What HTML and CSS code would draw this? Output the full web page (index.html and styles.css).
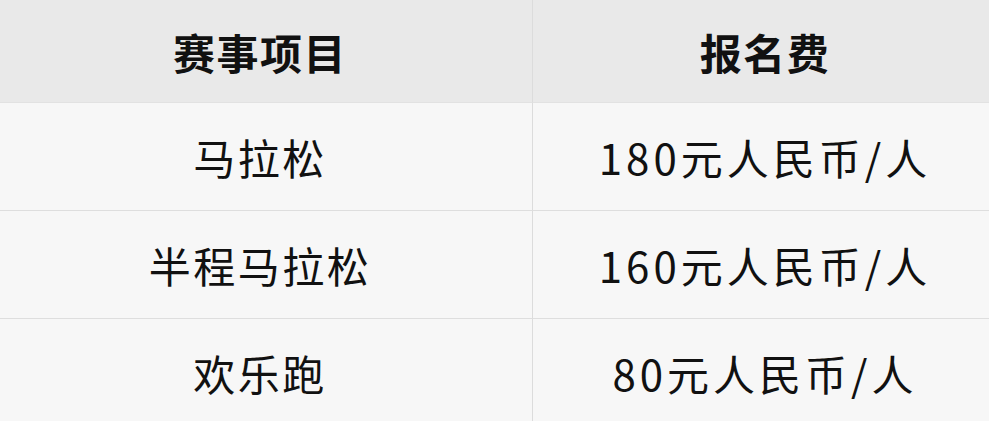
FILE: index.html
```html
<!DOCTYPE html>
<html lang="zh">
<head>
<meta charset="utf-8">
<link rel="stylesheet" href="styles.css">
</head>
<body>
<div class="table">
  <div class="cell head">赛事项目</div>
  <div class="cell head">报名费</div>
  <div class="cell">马拉松</div>
  <div class="cell price">180元人民币/人</div>
  <div class="cell">半程马拉松</div>
  <div class="cell price">160元人民币/人</div>
  <div class="cell">欢乐跑</div>
  <div class="cell price">80元人民币/人</div>
</div>
</body>
</html>
```
FILE: styles.css
```css
html, body {
  margin: 0;
  padding: 0;
  background: #f7f7f7;
}
.table {
  display: grid;
  grid-template-columns: 533px 1fr;
  grid-template-rows: 103px 108px 108px 108px;
  width: 989px;
  font-family: "Noto Sans CJK SC", "Noto Sans", sans-serif;
  color: #111;
}
.cell {
  display: flex;
  align-items: center;
  justify-content: center;
  font-size: 42px;
  letter-spacing: 2.5px;
  background: #f7f7f7;
  border-bottom: 1px solid #dedede;
  box-sizing: border-box;
}
.cell:nth-child(odd) {
  border-right: 1px solid #dcdcdc;
  padding-right: 12px;
}
.cell:nth-child(even) {
  padding-left: 8px;
}
.price {
  letter-spacing: 4px;
}
.head {
  background: #e9e9e9;
  font-weight: 700;
  letter-spacing: 1.5px;
  border-bottom: 1px solid #e2e2e2;
}
```
